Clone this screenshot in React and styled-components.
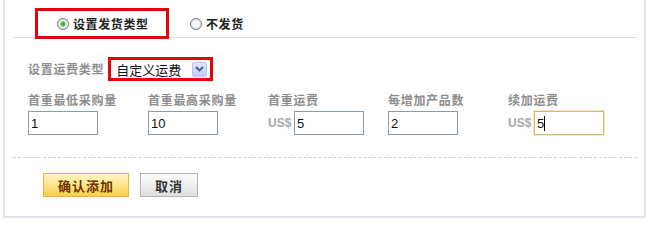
import styled, { createGlobalStyle } from 'styled-components';

const GlobalStyle = createGlobalStyle`
  html, body { margin: 0; padding: 0; background: #fff; }
  body { font-family: "Noto Sans CJK SC", "Liberation Sans", sans-serif; font-size: 12px; }
`;

const Frame = styled.div`
  margin-left: 3px;
  width: 639px;
  height: 216px;
  border-left: 2px solid #e3e8ec;
  border-right: 2px solid #dfe5ea;
  border-bottom: 2px solid #dfe5ea;
  display: flex;
  flex-direction: column;
`;

const TabRow = styled.div`
  display: flex;
  align-items: flex-end;
  margin: 0 7px 0 8px;
  height: 37px;
  border-bottom: 1px solid #dedede;
`;

const Tab = styled.div`
  display: flex;
  align-items: center;
  box-sizing: border-box;
  height: 31px;
  margin-bottom: -2px;
  margin-left: ${p => p.$offset}px;
  width: ${p => p.$boxed ? '134px' : 'auto'};
  padding-left: ${p => p.$boxed ? '19px' : '0'};
  border: ${p => p.$boxed ? '3px solid #e0060b' : '3px solid transparent'};
  font-weight: bold;
  color: #222;
  letter-spacing: 0.6px;
`;

const Radio = styled.span`
  box-sizing: border-box;
  width: 12px;
  height: 12px;
  margin-right: 4px;
  border-radius: 50%;
  border: 1px solid #6f7b85;
  background: radial-gradient(circle, #f6f6f6 40%, #dcdcdc 100%);
  display: flex;
  align-items: center;
  justify-content: center;
  &::after {
    content: '';
    width: 4px;
    height: 4px;
    border-radius: 50%;
    background: ${p => p.$checked ? '#3fa44a' : 'transparent'};
    box-shadow: ${p => p.$checked ? '0 0 1px 1px #9fd59f' : 'none'};
  }
`;

const Body = styled.div`
  padding-left: 23px;
`;

const TypeRow = styled.div`
  display: flex;
  align-items: center;
  margin-top: 19px;
  height: 24px;
`;

const Label = styled.span`
  color: #8d8d8d;
  font-weight: bold;
  letter-spacing: 0.7px;
  line-height: 16px;
`;

const SelectBox = styled.div`
  box-sizing: border-box;
  margin-left: 4px;
  width: 105px;
  height: 24px;
  border: 3px solid #e0060b;
  display: flex;
  align-items: center;
  justify-content: space-between;
  padding: 0 3px 0 5px;
  background: #fff;
  color: #111;
  font-size: 13px;
`;

const DropButton = styled.span`
  box-sizing: border-box;
  width: 15px;
  height: 15px;
  border: 1px solid #b7c8ee;
  border-radius: 2px;
  background: linear-gradient(#dfe8fd, #b9cdf8);
  display: flex;
  align-items: center;
  justify-content: center;
`;

const Grid = styled.div`
  display: grid;
  grid-template-columns: repeat(5, 120px);
  margin-top: 11px;
`;

const Field = styled.div`
  display: flex;
  flex-direction: column;
  gap: 3px;
`;

const InputRow = styled.div`
  display: flex;
  align-items: center;
`;

const Currency = styled.span`
  width: 26px;
  color: #a8a8a8;
  font-family: "Liberation Sans", Arial, sans-serif;
  font-weight: bold;
  font-size: 12px;
`;

const Input = styled.input`
  box-sizing: border-box;
  width: 70px;
  height: 24px;
  margin: 0;
  padding: 0 2px;
  border: 1px solid ${p => p.$active ? '#d8b86a' : '#8b9ca8'};
  box-shadow: ${p => p.$active ? '0 0 0 1px #f6e8bf' : 'none'};
  font-family: "Liberation Sans", Arial, sans-serif;
  font-size: 13px;
  color: #111;
  outline: none;
  background: #fff;
`;

const Caret = styled.span`
  display: inline-block;
  width: 1px;
  height: 15px;
  background: #000;
`;

const FakeInput = styled.div`
  box-sizing: border-box;
  width: 70px;
  height: 24px;
  padding: 0 2px;
  border: 1px solid #d8b86a;
  box-shadow: 0 0 0 1px #f6e8bf;
  display: flex;
  align-items: center;
  font-family: "Liberation Sans", Arial, sans-serif;
  font-size: 13px;
  color: #111;
`;

const Divider = styled.div`
  margin: 22px 7px 0 8px;
  border-top: 1px dashed #cfcfcf;
`;

const Actions = styled.div`
  display: flex;
  gap: 11px;
  margin-top: 15px;
  padding-left: 38px;
`;

const Button = styled.button`
  box-sizing: border-box;
  height: 24px;
  width: ${p => p.$primary ? '86px' : '58px'};
  border: 1px solid ${p => p.$primary ? '#e4b441' : '#b4b4b4'};
  background: ${p => p.$primary
    ? 'linear-gradient(#fff6c4, #fde283 55%, #f8cf50)'
    : 'linear-gradient(#fdfdfd, #ececec 55%, #dedede)'};
  color: ${p => p.$primary ? '#6e3300' : '#333'};
  font-family: "Noto Sans CJK SC", sans-serif;
  font-weight: bold;
  font-size: 13px;
  letter-spacing: 1px;
  padding: 0;
  cursor: pointer;
`;

const fields = [
  { label: '首重最低采购量', value: '1' },
  { label: '首重最高采购量', value: '10' },
  { label: '首重运费', value: '5', currency: true },
  { label: '每增加产品数', value: '2' },
  { label: '续加运费', value: '5', currency: true, active: true },
];

export default function App() {
  return (
    <>
      <GlobalStyle />
      <Frame>
        <TabRow>
          <Tab $boxed $offset={22}><Radio $checked />设置发货类型</Tab>
          <Tab $offset={18}><Radio />不发货</Tab>
        </TabRow>
        <Body>
          <TypeRow>
            <Label>设置运费类型</Label>
            <SelectBox>
              自定义运费
              <DropButton>
                <svg width="9" height="6" viewBox="0 0 9 6">
                  <path d="M1 1 L4.5 4.5 L8 1" fill="none" stroke="#4a5d86" strokeWidth="1.8" />
                </svg>
              </DropButton>
            </SelectBox>
          </TypeRow>
          <Grid>
            {fields.map(f => (
              <Field key={f.label}>
                <Label>{f.label}</Label>
                <InputRow>
                  {f.currency && <Currency>US$</Currency>}
                  {f.active
                    ? <FakeInput>{f.value}<Caret /></FakeInput>
                    : <Input defaultValue={f.value} />}
                </InputRow>
              </Field>
            ))}
          </Grid>
        </Body>
        <Divider />
        <Actions>
          <Button $primary>确认添加</Button>
          <Button>取消</Button>
        </Actions>
      </Frame>
    </>
  );
}
